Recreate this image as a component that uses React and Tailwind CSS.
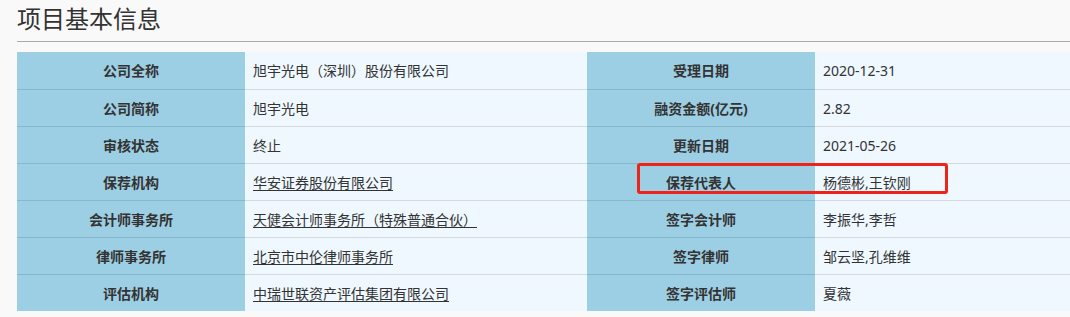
const rows = [
  { l1: '公司全称', v1: '旭宇光电（深圳）股份有限公司', l2: '受理日期', v2: '2020-12-31' },
  { l1: '公司简称', v1: '旭宇光电', l2: '融资金额(亿元)', v2: '2.82' },
  { l1: '审核状态', v1: '终止', l2: '更新日期', v2: '2021-05-26' },
  { l1: '保荐机构', v1: '华安证券股份有限公司', link: true, l2: '保荐代表人', v2: '杨德彬,王钦刚', mark: true },
  { l1: '会计师事务所', v1: '天健会计师事务所（特殊普通合伙）', link: true, l2: '签字会计师', v2: '李振华,李哲' },
  { l1: '律师事务所', v1: '北京市中伦律师事务所', link: true, l2: '签字律师', v2: '邹云坚,孔维维' },
  { l1: '评估机构', v1: '中瑞世联资产评估集团有限公司', link: true, l2: '签字评估师', v2: '夏薇' },
];

export default function App() {
  return (
    <div
      className="w-[1070px] h-[317px] overflow-hidden bg-[#f9f9f9] pl-[17px] text-[#333]"
      style={{ fontFamily: '"Noto Sans", "Noto Sans CJK SC", sans-serif' }}
    >
      {/* Title */}
      <div className="h-[42px] border-b border-[#aaaaaa] text-[24px] leading-[38px]">项目基本信息</div>

      {/* Info table */}
      <div className="mt-[10px] relative">
        {rows.map((r, i) => (
          <div key={i} className="flex h-[37px] text-[14px] relative">
            <div className={`w-[228px] flex items-center justify-center font-bold bg-[#9dcfe4] ${i ? 'border-t border-[#86b8cd]' : ''}`}>
              {r.l1}
            </div>
            <div className={`w-[342px] flex items-center pl-[8px] bg-[#eef8fe] ${i ? 'border-t border-[#d6dadc]' : ''}`}>
              {r.link ? <a className="underline underline-offset-2">{r.v1}</a> : r.v1}
            </div>
            <div className={`w-[228px] flex items-center justify-center font-bold bg-[#9dcfe4] ${i ? 'border-t border-[#86b8cd]' : ''}`}>
              {r.l2}
            </div>
            <div className={`flex-1 flex items-center pl-[8px] bg-[#eef8fe] ${i ? 'border-t border-[#d6dadc]' : ''}`}>
              {r.v2}
            </div>
            {r.mark && (
              <div className="absolute left-[620px] top-0 w-[311px] h-[31px] border-[3px] border-[#f0231b] rounded-[3px]" />
            )}
          </div>
        ))}
      </div>
    </div>
  );
}
